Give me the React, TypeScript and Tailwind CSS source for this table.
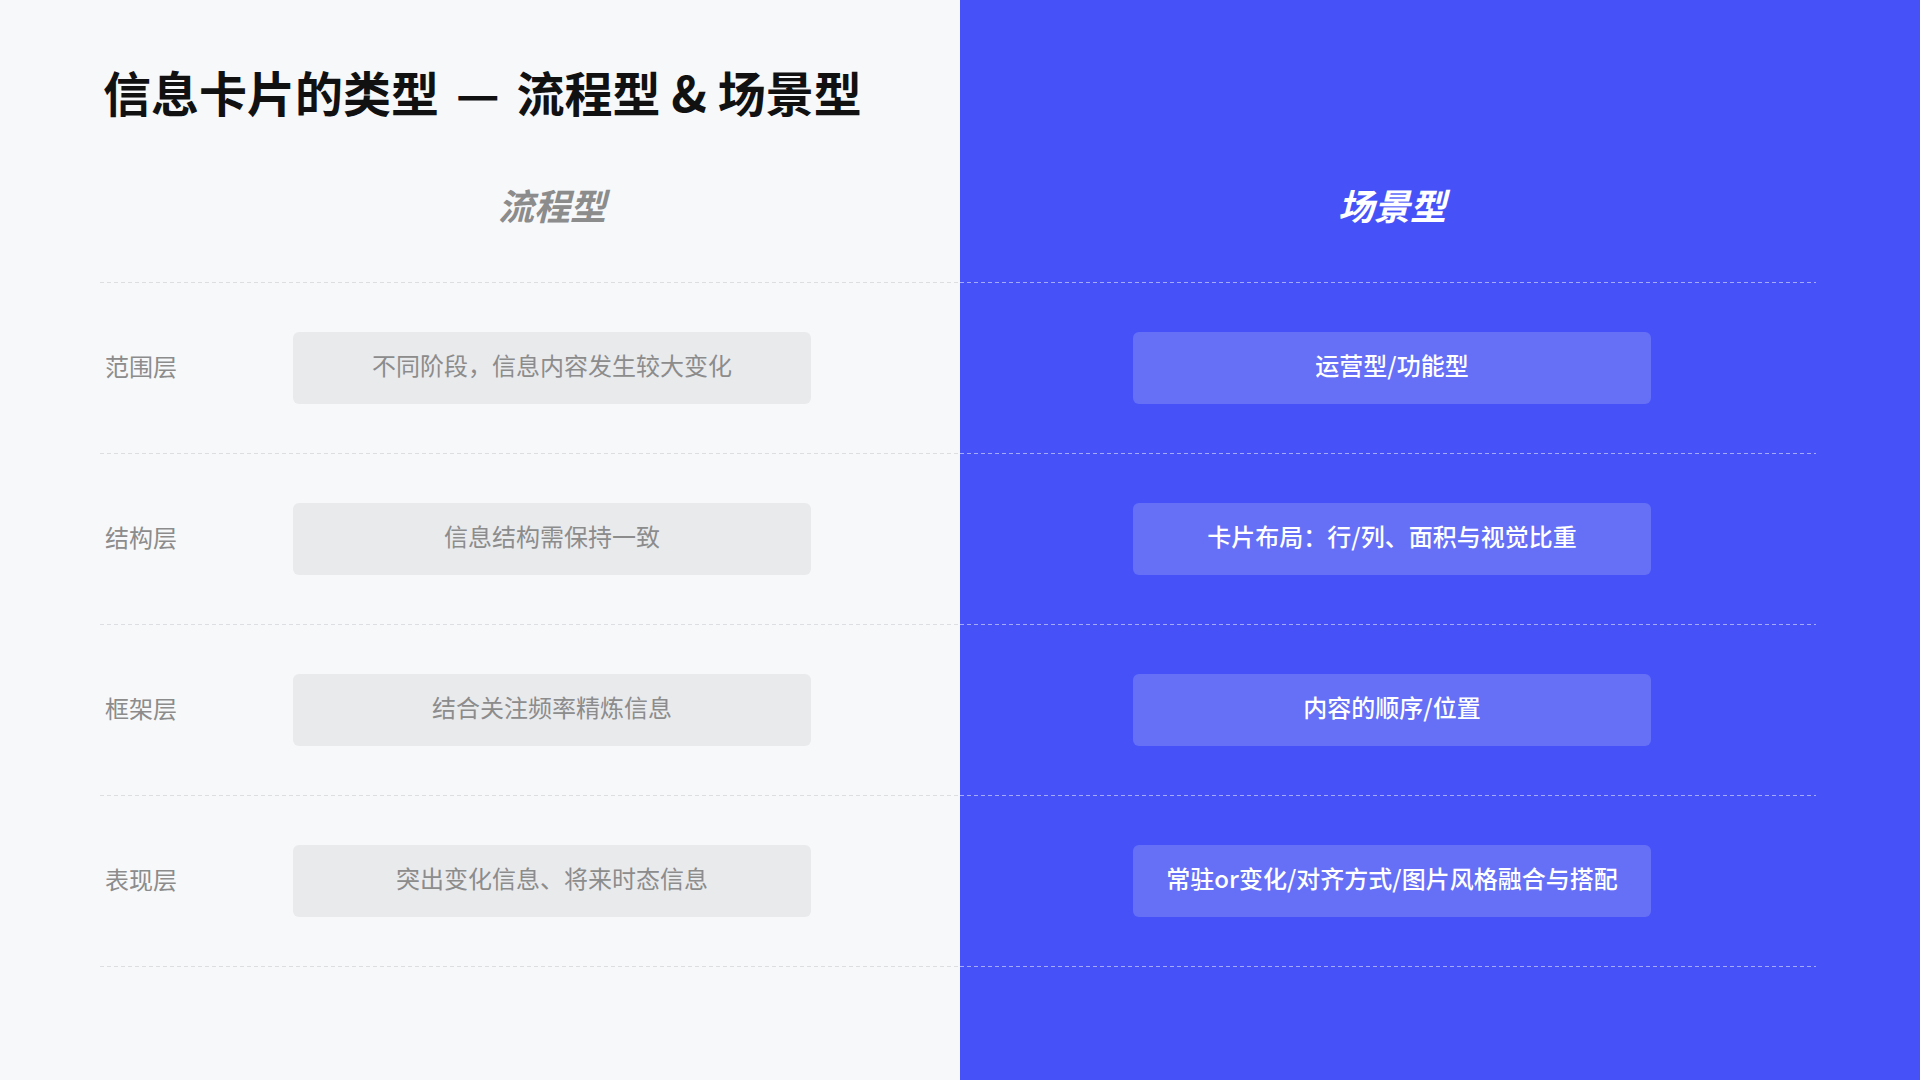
import React from "react";

const rows = [
  { label: "范围层", left: "不同阶段，信息内容发生较大变化", right: "运营型/功能型" },
  { label: "结构层", left: "信息结构需保持一致", right: "卡片布局：行/列、面积与视觉比重" },
  { label: "框架层", left: "结合关注频率精炼信息", right: "内容的顺序/位置" },
  { label: "表现层", left: "突出变化信息、将来时态信息", right: "常驻or变化/对齐方式/图片风格融合与搭配" },
];

function LeftLine() {
  return <div className="h-px w-full bg-[repeating-linear-gradient(to_right,#dcdee2_0px,#dcdee2_4px,transparent_4px,transparent_7px)]" />;
}

function RightLine() {
  return <div className="h-px w-full bg-[repeating-linear-gradient(to_right,#a3a9fb_0px,#a3a9fb_4px,transparent_4px,transparent_7px)]" />;
}

export default function App() {
  return (
    <div className="flex h-[1080px] w-[1920px] overflow-hidden font-['Noto_Sans_CJK_SC','Noto_Sans',sans-serif]">
      {/* Left panel */}
      <div className="flex w-[960px] shrink-0 flex-col bg-[#F7F8FA] pl-[100px]">
        <div className="h-[115px] pt-[67px] pl-[3px]">
          <h1 className="text-[48px] leading-[48px] font-bold text-[#111111] whitespace-nowrap">
            信息卡片的类型 <span className="mx-[6px]">—</span> 流程型 &amp; 场景型
          </h1>
        </div>
        <div className="mt-[71px] flex h-[36px]">
          <div className="w-[193px]" />
          <div className="w-[518px] text-center text-[36px] leading-[36px] font-bold italic text-[#8C8C8C]">
            流程型
          </div>
        </div>
        <div className="mt-[60px]">
          <LeftLine />
        </div>
        {rows.map((r) => (
          <div key={r.label} className="flex flex-col">
            <div className="flex h-[170px] items-center">
              <div className="w-[193px] pl-[5px] pb-[4px] text-[24px] leading-[24px] text-[#8C8C8C]">{r.label}</div>
              <div className="flex h-[72px] w-[518px] items-center justify-center rounded-[6px] bg-[#E9EAEC] pb-[6px] text-[24px] leading-[24px] text-[#8C8C8C]">
                {r.left}
              </div>
            </div>
            <LeftLine />
          </div>
        ))}
      </div>

      {/* Right panel */}
      <div className="flex flex-1 flex-col bg-[#4652F8] pr-[104px]">
        <div className="h-[115px]" />
        <div className="mt-[71px] flex h-[36px]">
          <div className="w-[173px]" />
          <div className="w-[518px] text-center text-[36px] leading-[36px] font-bold italic text-white">
            场景型
          </div>
        </div>
        <div className="mt-[60px]">
          <RightLine />
        </div>
        {rows.map((r) => (
          <div key={r.label} className="flex flex-col">
            <div className="flex h-[170px] items-center">
              <div className="w-[173px]" />
              <div className="flex h-[72px] w-[518px] items-center justify-center rounded-[6px] bg-[#6570F7] pb-[6px] text-[24px] leading-[24px] font-medium text-white">
                {r.right}
              </div>
            </div>
            <RightLine />
          </div>
        ))}
      </div>
    </div>
  );
}
